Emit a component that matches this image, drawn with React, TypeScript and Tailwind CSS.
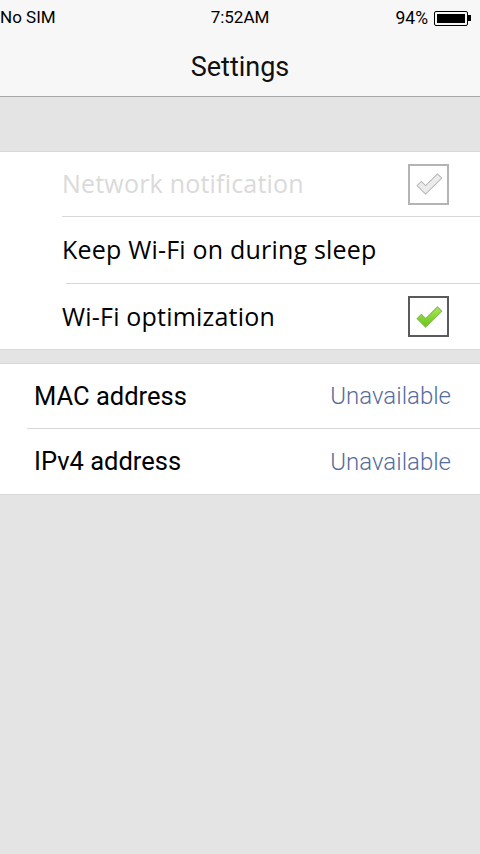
import React, { useState } from 'react';

// Check glyph drawn inside the settings checkboxes
const CheckMark = ({ enabled }: { enabled: boolean }) => (
  <svg viewBox="0 0 40 40" className="w-[34px] h-[34px]">
    <defs>
      <linearGradient id="chkGreen" x1="0" y1="0" x2="0" y2="1">
        <stop offset="0%" stopColor="#a8ec4e" />
        <stop offset="100%" stopColor="#66c41a" />
      </linearGradient>
    </defs>
    <path
      d="M6 22 L11 17 L16 22 L30 8 L35 13 L16 32 Z"
      fill={enabled ? 'url(#chkGreen)' : '#ececec'}
      stroke={enabled ? '#8bb85c' : '#b8b8b8'}
      strokeWidth="1.2"
      strokeLinejoin="round"
    />
  </svg>
);

const CheckBox = ({ checked, enabled }: { checked: boolean; enabled: boolean }) => (
  <div
    className={`w-[41px] h-[41px] flex items-center justify-center border-2 ${
      enabled ? 'border-[#5a5a5a]' : 'border-[#b4b4b4]'
    }`}
  >
    {checked && <CheckMark enabled={enabled} />}
  </div>
);

const Battery = () => (
  <div className="flex items-center">
    <div className="w-[34px] h-[15px] border border-black rounded-[2px] p-[2px]">
      <div className="w-full h-full bg-black" />
    </div>
    <div className="w-[3px] h-[6px] bg-black" />
  </div>
);

const rowText = 'text-[25px] tracking-[0.2px] font-["Open_Sans",sans-serif]';

const App = () => {
  const [wifiOpt, setWifiOpt] = useState(true);

  return (
    <div
      className="min-h-[854px] bg-[#e4e4e4] flex flex-col"
      style={{ fontFamily: 'Roboto, "Noto Sans", sans-serif' }}
    >
      {/* --- STATUS BAR + TITLE --- */}
      <header className="bg-[#f7f7f7] border-b border-[#a9a9a9] h-[97px] flex flex-col">
        <div className="h-[36px] flex items-center justify-between text-[17px] text-black relative">
          <span>No SIM</span>
          <span className="absolute left-1/2 -translate-x-1/2">7:52AM</span>
          <div className="flex items-center gap-[6px] pr-[9px]">
            <span className="text-[17.5px]">94%</span>
            <Battery />
          </div>
        </div>
        <div className="flex-1 flex items-center justify-center pt-[3px]">
          <h1 className="text-[27px] text-[#111]">Settings</h1>
        </div>
      </header>

      <div className="h-[55px] border-b border-[#d8d8d8]" />

      {/* --- WI-FI OPTIONS --- */}
      <section className="bg-white border-b border-[#d8d8d8]">
        <div className="ml-[62px] h-[65px] flex items-center justify-between pr-[31px] border-b border-[#d8d8d8]">
          <span className={`${rowText} text-[#dadada]`}>Network notification</span>
          <CheckBox checked enabled={false} />
        </div>
        <div className="ml-[66px] h-[67px] flex items-center border-b border-[#d8d8d8]">
          <span className={`${rowText} text-black -ml-[4px]`}>Keep Wi-Fi on during sleep</span>
        </div>
        <div className="ml-[62px] h-[65px] flex items-center justify-between pr-[31px]">
          <span className={`${rowText} text-black`}>Wi-Fi optimization</span>
          <button onClick={() => setWifiOpt(!wifiOpt)}>
            <CheckBox checked={wifiOpt} enabled />
          </button>
        </div>
      </section>

      <div className="h-[14px] border-b border-[#d8d8d8]" />

      {/* --- ADDRESSES --- */}
      <section className="bg-white border-b border-[#d8d8d8]">
        <div className="ml-[27px] h-[65px] flex items-center justify-between pr-[29px] border-b border-[#d8d8d8]">
          <span className="text-[25.5px] text-black ml-[7px]">MAC address</span>
          <span className="text-[24px] font-light text-[#566c9c]">Unavailable</span>
        </div>
        <div className="ml-[27px] h-[65px] flex items-center justify-between pr-[29px]">
          <span className="text-[25.5px] text-black ml-[7px]">IPv4 address</span>
          <span className="text-[24px] font-light text-[#566c9c]">Unavailable</span>
        </div>
      </section>
    </div>
  );
};

export default App;
